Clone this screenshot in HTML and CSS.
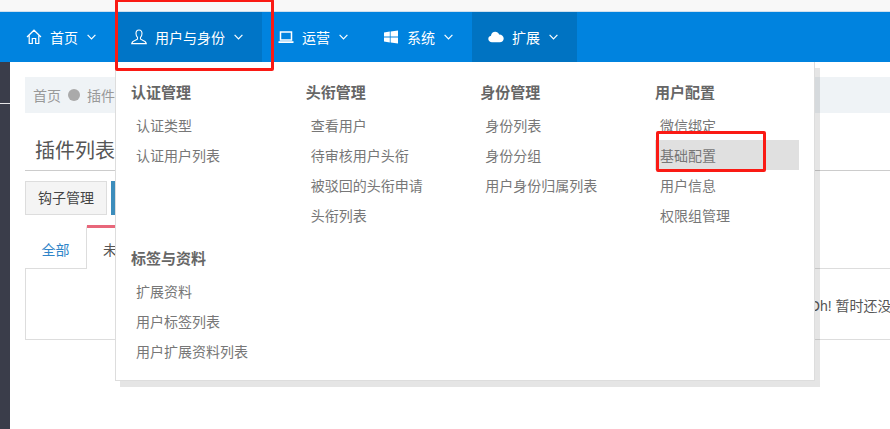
FILE: index.html
```html
<!DOCTYPE html>
<html lang="zh-CN">
<head>
<meta charset="utf-8">
<title>插件列表</title>
<link rel="stylesheet" href="styles.css">
</head>
<body>
<div class="app">
  <div class="topstrip"></div>
  <nav class="nav">
    <a class="nav-item">
      <svg class="nav-icon" viewBox="0 0 16 16"><path d="M1 8 8 1.2 15 8M3.2 6.5V14.500H6.300V9.500H9.700V14.500H12.800V6.500" fill="none" stroke="#fff" stroke-width="1.2"/></svg>
      <span>首页</span>
      <svg class="chev" viewBox="0 0 9 6"><path d="M.6.8 4.500 4.800 8.400.8" fill="none" stroke="#fff" stroke-width="1.2"/></svg>
    </a>
    <a class="nav-item is-open">
      <svg class="nav-icon" viewBox="0 0 16 16"><path d="M8 1C5.900 1 5 2.600 5 4.600 5 6.400 5.700 7.600 6.500 8.400V10C6 11 1 11.400.7 14.600H15.300C15 11.400 10 11 9.500 10V8.400C10.300 7.600 11 6.400 11 4.600 11 2.600 10.100 1 8 1Z" fill="none" stroke="#fff" stroke-width="1.1"/></svg>
      <span>用户与身份</span>
      <svg class="chev" viewBox="0 0 9 6"><path d="M.6.8 4.500 4.800 8.400.8" fill="none" stroke="#fff" stroke-width="1.2"/></svg>
    </a>
    <a class="nav-item">
      <svg class="nav-icon" viewBox="0 0 16 16"><path d="M2.500 3H13.500V11H2.500Z" fill="none" stroke="#fff" stroke-width="1.5"/><path d="M.5 12.200H15.500V14H.5Z" fill="#fff"/></svg>
      <span>运营</span>
      <svg class="chev" viewBox="0 0 9 6"><path d="M.6.8 4.500 4.800 8.400.8" fill="none" stroke="#fff" stroke-width="1.2"/></svg>
    </a>
    <a class="nav-item">
      <svg class="nav-icon" viewBox="0 0 16 16"><path d="M1 3.400 6.800 2.600V7.600H1ZM7.600 2.500 15 1.400V7.600H7.600ZM1 8.400H6.800V13.400L1 12.600ZM7.600 8.400H15V14.600L7.600 13.500Z" fill="#fff"/></svg>
      <span>系统</span>
      <svg class="chev" viewBox="0 0 9 6"><path d="M.6.8 4.500 4.800 8.400.8" fill="none" stroke="#fff" stroke-width="1.2"/></svg>
    </a>
    <a class="nav-item is-active">
      <svg class="nav-icon" viewBox="0 0 16 16"><path d="M4 13.200C2 13.200.3 11.800.3 9.900.3 8.300 1.400 7 3 6.700 3.200 4.400 5 2.800 7.200 2.800 9 2.800 10.500 3.900 11.100 5.500 13.700 5.400 15.700 7.200 15.700 9.400 15.700 11.500 14 13.200 11.800 13.200Z" fill="#fff"/></svg>
      <span>扩展</span>
      <svg class="chev" viewBox="0 0 9 6"><path d="M.6.8 4.500 4.800 8.400.8" fill="none" stroke="#fff" stroke-width="1.2"/></svg>
    </a>
  </nav>

  <div class="body">
    <aside class="sidebar"><div class="sidebar-rule"></div></aside>
    <main class="main">
      <div class="crumbs"><span>首页</span><i class="crumb-dot"></i><span>插件管理</span></div>
      <h1 class="title">插件列表</h1>
      <div class="toolbar">
        <button class="btn">钩子管理</button>
        <button class="btn btn-primary">安装插件</button>
      </div>
      <div class="tabs">
        <a class="tab">全部</a>
        <a class="tab tab-active">未安装</a>
        <div class="tab-fill"></div>
      </div>
      <div class="panel"><p class="empty">Oh! 暂时还没有内容!</p></div>
    </main>
  </div>

  <div class="menu">
    <section class="group">
      <h3>认证管理</h3>
      <a>认证类型</a>
      <a>认证用户列表</a>
    </section>
    <section class="group">
      <h3>头衔管理</h3>
      <a>查看用户</a>
      <a>待审核用户头衔</a>
      <a>被驳回的头衔申请</a>
      <a>头衔列表</a>
    </section>
    <section class="group">
      <h3>身份管理</h3>
      <a>身份列表</a>
      <a>身份分组</a>
      <a>用户身份归属列表</a>
    </section>
    <section class="group">
      <h3>用户配置</h3>
      <a>微信绑定</a>
      <a class="is-hover">基础配置</a>
      <a>用户信息</a>
      <a>权限组管理</a>
    </section>
    <section class="group">
      <h3>标签与资料</h3>
      <a>扩展资料</a>
      <a>用户标签列表</a>
      <a>用户扩展资料列表</a>
    </section>
  </div>

  <div class="mark mark-nav"></div>
  <div class="mark mark-item"></div>
</div>
</body>
</html>
```

FILE: styles.css
```css
* { box-sizing: border-box; }
html, body { margin: 0; height: 100%; }
body {
  font-family: "Noto Sans CJK SC", "Liberation Sans", sans-serif;
  font-size: 14px;
  color: #444;
  background: #fff;
}
.app { position: relative; width: 890px; height: 429px; overflow: hidden; }
.topstrip { height: 11px; background: #f8f8f8; }

.nav {
  display: flex;
  height: 51px;
  padding-left: 10px;
  background: #0083df;
  border-top: 1px solid #cfe0ee;
}
.nav-item {
  display: flex;
  align-items: center;
  height: 50px;
  padding: 0 19px 0 16px;
  color: #fff;
  line-height: 20px;
}
.nav-item.is-open { background: #0075c7; }
.nav-item.is-active { background: #0073c2; }
.nav-icon { width: 16px; height: 16px; margin-right: 8px; flex: none; }
.chev { width: 9px; height: 6px; margin-left: 9px; flex: none; }

.body { display: flex; height: 367px; }
.sidebar { width: 10px; flex: none; background: #3a3d4a; padding-top: 41px; }
.sidebar-rule { height: 1px; background: #e6e6e8; }
.main { flex: 1; min-width: 0; padding: 15px 0 0 15px; }

.crumbs {
  display: flex;
  align-items: center;
  height: 36px;
  padding-left: 8px;
  background: #eff3f6;
  color: #999;
  line-height: 20px;
}
.crumb-dot { width: 12px; height: 12px; margin: 0 7px; border-radius: 50%; background: #aaa; }

.title {
  margin: 0;
  height: 58px;
  padding: 23px 0 0 10px;
  border-bottom: 1px solid #ccc;
  font-size: 20px;
  font-weight: 400;
  line-height: 28px;
  color: #555;
}
.toolbar { display: flex; gap: 4px; margin-top: 10px; }
.btn {
  width: 82px;
  height: 34px;
  padding: 0 0 2px;
  border: 1px solid #ddd;
  background: #f4f4f4;
  color: #444;
  font: inherit;
  line-height: 20px;
}
.btn-primary { background: #3c8dbc; border-color: #3c8dbc; color: #fff; }

.tabs { display: flex; margin-top: 10px; height: 44px; }
.tab {
  display: block;
  width: 62px;
  padding-top: 11px;
  text-align: center;
  line-height: 20px;
  color: #2f85c9;
  border-right: 1px solid #ddd;
  border-bottom: 1px solid #ddd;
  border-top: 3px solid transparent;
}
.tab-active {
  width: 100px;
  padding-left: 16px;
  text-align: left;
  color: #555;
  border-top-color: #e8677a;
  border-bottom-color: transparent;
  border-right: 1px solid #ddd;
}
.tab-fill { flex: 1; border-bottom: 1px solid #ddd; }
.panel {
  height: 71px;
  border-left: 1px solid #ddd;
  border-bottom: 1px solid #ddd;
  padding: 27px 0 0 783px;
  white-space: nowrap;
}
.empty {
  margin: 0;
  font-family: "Liberation Sans", "Noto Sans CJK SC", sans-serif;
  line-height: 20px;
  color: #555;
}

.menu {
  position: absolute;
  left: 115px;
  top: 62px;
  width: 700px;
  padding: 16px 15px 14px;
  display: grid;
  grid-template-columns: repeat(4, 144px);
  column-gap: 30.67px;
  row-gap: 14px;
  background: #fff;
  border: 1px solid #ddd;
  border-top: 0;
  box-shadow: 5px 6px 0 rgba(0, 0, 0, .1);
}
.group h3 {
  margin: 0;
  height: 32px;
  padding-top: 4px;
  font-size: 15px;
  font-weight: 700;
  line-height: 20px;
  color: #666;
}
.group a {
  display: block;
  height: 30px;
  padding: 5px 0 0 5px;
  line-height: 20px;
  color: #777;
}
.group a.is-hover { background: #e0e0e0; }

.mark { position: absolute; border: 3px solid #fa1a14; border-radius: 2px; }
.mark-nav { left: 115px; top: -1px; width: 159px; height: 72px; }
.mark-item { left: 656px; top: 131px; width: 110px; height: 41px; }
```
